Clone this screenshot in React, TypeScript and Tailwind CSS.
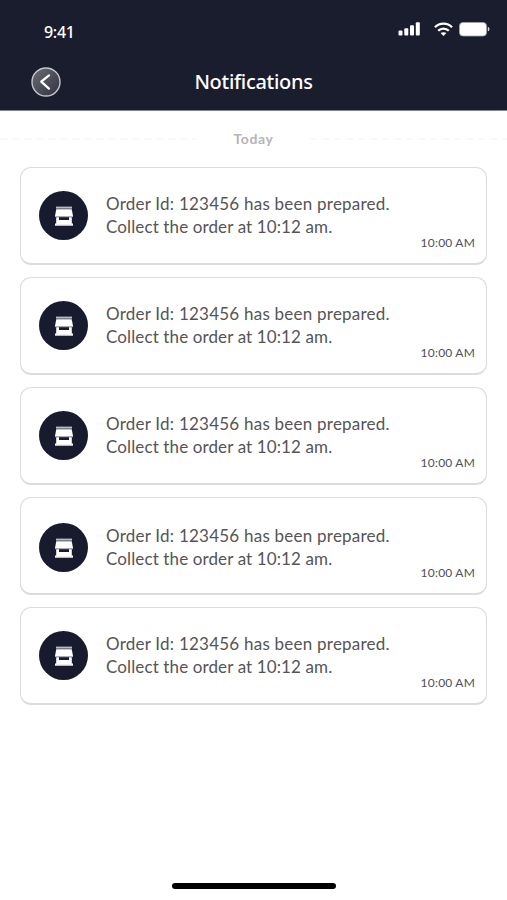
import clsx from "clsx";

const notifications = [
  { id: 1, time: "10:00 AM" },
  { id: 2, time: "10:00 AM" },
  { id: 3, time: "10:00 AM" },
  { id: 4, time: "10:00 AM", lowered: true },
  { id: 5, time: "10:00 AM" },
];

function SignalIcon() {
  return (
    <svg width="22" height="14" viewBox="0 0 22 14" fill="currentColor">
      <rect x="0.5" y="8.5" width="4" height="5" rx="1" />
      <rect x="6.3" y="6.2" width="4" height="7.3" rx="1" />
      <rect x="12" y="3.3" width="4" height="10.2" rx="1" />
      <rect x="17.8" y="0.3" width="4" height="13.2" rx="1" />
    </svg>
  );
}

function WifiIcon() {
  return (
    <svg width="19" height="14" viewBox="0 0 19 14" fill="none" stroke="currentColor" strokeWidth="2.3">
      <path d="M1 5.2C5.6 0.3 13.4 0.3 18 5.2" />
      <path d="M4.2 8.8C7.1 5.8 11.9 5.8 14.8 8.8" />
      <path d="M6.6 11.1C8.2 9.8 10.8 9.8 12.4 11.1L9.5 13.9Z" fill="currentColor" stroke="none" />
    </svg>
  );
}

function BatteryIcon() {
  return (
    <svg width="31" height="16" viewBox="0 0 31 16">
      <rect x="0.5" y="0.5" width="27" height="13.5" rx="3.5" fill="#fff" stroke="#a3a4ad" strokeWidth="0.8" />
      <path d="M28.8 4.8C31 5.7 31 8.7 28.8 9.6Z" fill="#dcdce2" />
    </svg>
  );
}

function BackIcon() {
  return (
    <svg width="30" height="30" viewBox="0 0 30 30" fill="none">
      <defs>
        <linearGradient id="back-fill" x1="0" y1="0" x2="1" y2="1">
          <stop stopColor="#6b6c75" />
          <stop offset="1" stopColor="#30323f" />
        </linearGradient>
      </defs>
      <circle cx="15" cy="15" r="14" fill="url(#back-fill)" stroke="#c5c5d0" strokeWidth="1.4" />
      <path d="M18 8.4L10.2 14.6L18 21.6" stroke="#fff" strokeWidth="2.3" strokeLinecap="round" strokeLinejoin="round" />
    </svg>
  );
}

function StoreIcon() {
  return (
    <svg width="20" height="20" viewBox="0 0 20 20" fill="#fff">
      <rect x="2" y="0.6" width="16" height="2" fill="#b9bac5" />
      <path d="M2.3 3.2H17.7L19 10H1Z" />
      <path d="M1 10H19V11.2H1Z" fill="#a9abb7" />
      <path d="M2.2 11.2H5V14H15V11.2H17.8V17.4H19V19.6H1V17.4H2.2Z" />
      <rect x="1" y="18.7" width="18" height="1" fill="#c9cad2" />
    </svg>
  );
}

function Header() {
  return (
    <header className="flex h-[111px] flex-col border-b border-[#85868e] bg-[#1a1d2e] text-white">
      <div className="flex h-[60px] items-start justify-between pt-[22px] pr-[17px] pl-11">
        <span className="font-['Noto_Sans'] text-base leading-5 font-medium tracking-[-0.3px]">9:41</span>
        <div className="flex items-start">
          <SignalIcon />
          <span className="ml-[14px]">
            <WifiIcon />
          </span>
          <span className="ml-[6px]">
            <BatteryIcon />
          </span>
        </div>
      </div>
      <div className="grid grid-cols-[1fr_auto_1fr] items-center px-[31px] pt-[7px]">
        <button aria-label="Back" className="size-[30px]">
          <BackIcon />
        </button>
        <h1 className="font-['Noto_Sans'] text-[20px] leading-[30px] font-medium tracking-[-0.3px]">Notifications</h1>
      </div>
    </header>
  );
}

function DashedLine({ className }: { className: string }) {
  return (
    <svg height="2" className={className}>
      <line x1="0" y1="1" x2="100%" y2="1" stroke="#f9f9f9" strokeWidth="2" strokeDasharray="7 5" />
    </svg>
  );
}

function NotificationCard({ time, lowered }: { time: string; lowered?: boolean }) {
  return (
    <li className="relative h-[98px] rounded-[11px] border-[1.5px] border-b-2 border-[#dcdcdc] bg-white pt-[23px] pl-[18px]">
      <div className={clsx("flex items-start", lowered && "mt-[2px]")}>
        <span className="flex size-[49px] shrink-0 items-center justify-center rounded-full bg-[#181b2d]">
          <StoreIcon />
        </span>
        <p className="mt-px ml-[18px] text-[17px] leading-[23px] whitespace-nowrap text-[#555]">
          <span className="block tracking-[0.23px]">Order Id: 123456 has been prepared.</span>
          <span className="block tracking-[0.12px]">Collect the order at 10:12 am.</span>
        </p>
      </div>
      <time className="absolute right-[11px] bottom-3 text-[12px] leading-4 tracking-[0.2px] text-[#505058]">{time}</time>
    </li>
  );
}

export default function App() {
  return (
    <div className="flex h-[900px] w-[507px] flex-col overflow-hidden bg-white font-[Lato,sans-serif]">
      <Header />
      <div className="flex h-14 items-center justify-between">
        <DashedLine className="w-[197px]" />
        <span className="text-[14px] leading-5 font-bold tracking-[0.6px] text-[#b5b5b5]">Today</span>
        <DashedLine className="w-[197px]" />
      </div>
      <ul className="flex flex-col gap-3 px-5">
        {notifications.map((n) => (
          <NotificationCard key={n.id} time={n.time} lowered={n.lowered} />
        ))}
      </ul>
      <div className="mx-auto mt-auto mb-[11px] h-[6px] w-[164px] rounded-full bg-black" />
    </div>
  );
}
